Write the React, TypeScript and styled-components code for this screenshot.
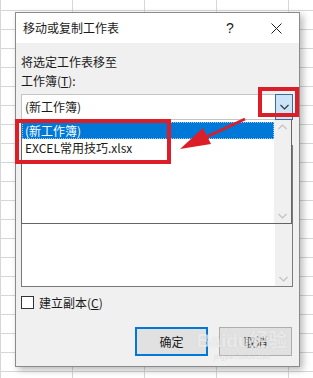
import React from 'react';
import styled, { createGlobalStyle } from 'styled-components';

const GlobalStyle = createGlobalStyle`
  html, body {
    margin: 0;
    padding: 0;
  }
  body {
    width: 313px;
    height: 378px;
    overflow: hidden;
    background-color: #ffffff;
    background-image:
      linear-gradient(to right, #d6d6d6 1px, transparent 1px),
      linear-gradient(to bottom, #d6d6d6 1px, transparent 1px);
    background-size: 72px 100%, 100% 19px;
    background-position: 0 0, 0 10px;
    font-family: "Noto Sans CJK SC", "Noto Sans", sans-serif;
    font-size: 12px;
    color: #1a1a1a;
  }
`;

const Page = styled.div`
  position: relative;
  width: 313px;
  height: 378px;
  padding: 12px 0 0 15px;
  box-sizing: border-box;
`;

const Dialog = styled.div`
  width: 285px;
  height: 355px;
  box-sizing: border-box;
  border: 1px solid #8a8a8a;
  background: #f0f0f0;
  box-shadow: 3px 3px 7px rgba(0, 0, 0, 0.28);
  display: flex;
  flex-direction: column;
`;

const TitleBar = styled.div`
  height: 30px;
  background: #ffffff;
  display: flex;
  align-items: center;
  padding-left: 7px;
`;

const Title = styled.div`
  flex: 1;
  font-size: 12px;
  line-height: 16px;
`;

const TitleButton = styled.div<{ $w: number }>`
  width: ${p => p.$w}px;
  height: 30px;
  display: flex;
  align-items: center;
  justify-content: center;
  font-family: "Liberation Sans", sans-serif;
  font-size: 14px;
`;

const Body = styled.div`
  flex: 1;
  display: flex;
  flex-direction: column;
  padding: 0 6px 0 5px;
`;

const Label = styled.div<{ $top: number }>`
  margin-top: ${p => p.$top}px;
  line-height: 16px;
  height: 16px;
`;

const Underline = styled.span`
  text-decoration: underline;
`;

const Combo = styled.div`
  margin-top: 5px;
  height: 26px;
  box-sizing: border-box;
  border: 1px solid #c4c4c4;
  border-right: none;
  background: #ffffff;
  display: flex;
  align-items: center;
`;

const ComboText = styled.div`
  flex: 1;
  padding-left: 3px;
  line-height: 16px;
`;

const ComboButton = styled.div`
  width: 18px;
  height: 26px;
  box-sizing: border-box;
  border: 1px solid #3c6e95;
  background: #cce4f7;
  display: flex;
  align-items: center;
  justify-content: center;
`;

/* the "before sheet" list; its label sits under the open drop-down */
const ListBox = styled.div`
  margin-top: 25px;
  height: 142px;
  box-sizing: border-box;
  border: 1px solid #7a7a7a;
  background: #ffffff;
  display: flex;
  justify-content: flex-end;
`;

const ScrollTrack = styled.div`
  width: 17px;
  background: #f0f0f0;
  display: flex;
  flex-direction: column;
  justify-content: space-between;
  align-items: center;
  padding: 4px 0;
`;

const CheckRow = styled.label`
  margin-top: 9px;
  display: flex;
  align-items: center;
  gap: 5px;
  height: 13px;
  line-height: 16px;
`;

const CheckBox = styled.span`
  width: 13px;
  height: 13px;
  box-sizing: border-box;
  border: 1px solid #333333;
  background: #ffffff;
`;

const ButtonRow = styled.div`
  margin-top: 18px;
  display: flex;
  justify-content: flex-end;
  gap: 11px;
  padding-right: 1px;
`;

const Button = styled.div<{ $primary?: boolean }>`
  width: 73px;
  height: 29px;
  box-sizing: border-box;
  border: ${p => (p.$primary ? '2px solid #0078d7' : '1px solid #adadad')};
  background: #e1e1e1;
  display: flex;
  align-items: center;
  justify-content: center;
  color: ${p => (p.$primary ? '#1a1a1a' : '#3a3a3a')};
`;

const DropList = styled.div`
  position: absolute;
  left: 21px;
  top: 120px;
  width: 271px;
  height: 104px;
  box-sizing: border-box;
  border: 1px solid #646464;
  border-top: none;
  background: #ffffff;
  display: flex;
`;

const DropItems = styled.div`
  flex: 1;
  padding-top: 2px;
`;

const DropItem = styled.div<{ $selected?: boolean }>`
  height: 17px;
  line-height: 17px;
  padding-left: 3px;
  box-sizing: border-box;
  background: ${p => (p.$selected ? '#0078d7' : 'transparent')};
  color: ${p => (p.$selected ? '#ffffff' : '#1a1a1a')};
  outline: ${p => (p.$selected ? '1px dotted #9fc7ee' : 'none')};
  outline-offset: -1px;
`;

const RedBox = styled.div`
  position: absolute;
  box-sizing: border-box;
  border: 4px solid #dc1e28;
`;

const Overlay = styled.svg`
  position: absolute;
  left: 0;
  top: 0;
  pointer-events: none;
`;

const Watermark = styled.div`
  position: absolute;
  left: 194px;
  top: 330px;
  width: 96px;
  white-space: nowrap;
  color: rgba(255, 255, 255, 0.6);
  text-shadow: 0 0 1px rgba(150, 150, 150, 0.35);
  font-family: "Liberation Sans", "Noto Sans CJK SC", sans-serif;
  pointer-events: none;
  text-align: center;
`;

const WatermarkMain = styled.div`
  font-size: 19px;
  font-weight: bold;
  line-height: 22px;
`;

const WatermarkSub = styled.div`
  font-size: 7px;
  line-height: 9px;
  color: rgba(210, 210, 210, 0.6);
  text-shadow: none;
`;

const Chevron = ({ up, color }: { up?: boolean; color: string }) => (
  <svg width="9" height="6" viewBox="0 0 9 6">
    <path d={up ? 'M0.5 5 L4.5 1 L8.5 5' : 'M0.5 1 L4.5 5 L8.5 1'} fill="none" stroke={color} strokeWidth="1.1" />
  </svg>
);

export default function App() {
  return (
    <>
      <GlobalStyle />
      <Page>
        <Dialog>
          <TitleBar>
            <Title>移动或复制工作表</Title>
            <TitleButton $w={46}>?</TitleButton>
            <TitleButton $w={46}>
              <svg width="11" height="11" viewBox="0 0 11 11">
                <path d="M0.5 0.5 L10.5 10.5 M10.5 0.5 L0.5 10.5" stroke="#222" strokeWidth="1" />
              </svg>
            </TitleButton>
          </TitleBar>
          <Body>
            <Label $top={11}>将选定工作表移至</Label>
            <Label $top={3}>工作簿(<Underline>T</Underline>):</Label>
            <Combo>
              <ComboText>(新工作簿)</ComboText>
              <ComboButton>
                <Chevron color="#333" />
              </ComboButton>
            </Combo>
            <ListBox>
              <ScrollTrack>
                <Chevron up color="#c0c0c0" />
                <Chevron color="#c0c0c0" />
              </ScrollTrack>
            </ListBox>
            <CheckRow>
              <CheckBox />
              <span>建立副本(<Underline>C</Underline>)</span>
            </CheckRow>
            <ButtonRow>
              <Button $primary>确定</Button>
              <Button>取消</Button>
            </ButtonRow>
          </Body>
        </Dialog>

        <DropList>
          <DropItems>
            <DropItem $selected>(新工作簿)</DropItem>
            <DropItem>EXCEL常用技巧.xlsx</DropItem>
          </DropItems>
          <ScrollTrack>
            <Chevron up color="#c0c0c0" />
            <Chevron color="#c0c0c0" />
          </ScrollTrack>
        </DropList>

        <RedBox style={{ left: 258, top: 87, width: 41, height: 30 }} />
        <RedBox style={{ left: 15, top: 119, width: 156, height: 45 }} />

        <Overlay width="313" height="378" viewBox="0 0 313 378">
          <line x1="245" y1="119" x2="200" y2="140" stroke="#dc1e28" strokeWidth="3" />
          <polygon points="180,149 203,128 211,144" fill="#dc1e28" />
        </Overlay>

        <Watermark>
          <WatermarkMain>Baidu经验</WatermarkMain>
          <WatermarkSub>jingyan.baidu.com</WatermarkSub>
        </Watermark>
      </Page>
    </>
  );
}
